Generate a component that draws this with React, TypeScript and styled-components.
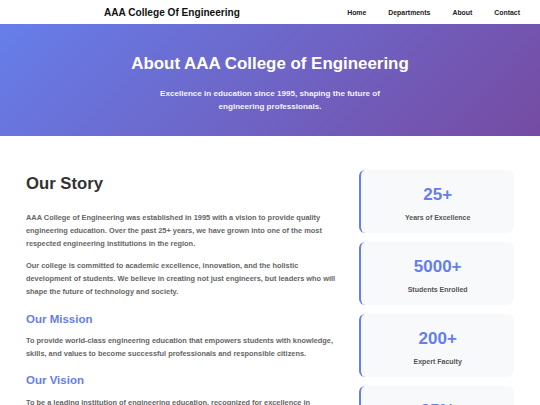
import React from "react";
import styled, { createGlobalStyle } from "styled-components";

const Global = createGlobalStyle`
  * { box-sizing: border-box; margin: 0; padding: 0; }
  body { font-family: "Liberation Sans", Arial, sans-serif; background: #fff; color: #333; }
`;

const Header = styled.header`
  height: 24px;
  display: flex;
  align-items: center;
  justify-content: space-between;
  padding: 0 20px 0 104px;
  background: #fff;
`;

const Logo = styled.div`
  font-size: 10.1px;
  font-weight: 700;
  color: #111;
`;

const Nav = styled.nav`
  display: flex;
  gap: 22px;
`;

const NavLink = styled.a`
  font-size: 6.9px;
  font-weight: 700;
  color: #222;
  text-decoration: none;
`;

const Hero = styled.section`
  height: 112px;
  background: linear-gradient(135deg, #667eea 0%, #764ba2 100%);
  color: #fff;
  display: flex;
  flex-direction: column;
  align-items: center;
  padding-top: 29px;
  text-align: center;
`;

const HeroTitle = styled.h1`
  font-size: 16.9px;
  font-weight: 700;
  line-height: 22px;
`;

const HeroText = styled.p`
  margin-top: 11.5px;
  max-width: 232px;
  font-size: 8.1px;
  font-weight: 700;
  line-height: 13px;
  opacity: 0.92;
`;

const Main = styled.main`
  display: grid;
  grid-template-columns: 2fr 1fr;
  gap: 24px;
  padding: 34px 26px 0;
`;

const Story = styled.div``;

const StoryTitle = styled.h2`
  font-size: 16.7px;
  font-weight: 700;
  color: #333;
  line-height: 22px;
  margin-top: 3px;
  margin-bottom: 16px;
`;

const SubTitle = styled.h3`
  font-size: 11.5px;
  font-weight: 700;
  color: #667eea;
  line-height: 14px;
  margin: 13px 0 8.5px;
`;

const Para = styled.p`
  font-size: 7.4px;
  font-weight: 700;
  color: #666;
  line-height: 13.1px;
  margin-bottom: 9px;
`;

const Stats = styled.div`
  display: flex;
  flex-direction: column;
  gap: 9px;
`;

const StatCard = styled.div`
  height: 63px;
  padding-top: 2px;
  background: #f8f9fb;
  border-left: 2px solid #667eea;
  border-radius: 6px;
  display: flex;
  flex-direction: column;
  align-items: center;
  justify-content: center;
  gap: 9px;
`;

const StatNumber = styled.div`
  font-size: 17px;
  font-weight: 700;
  color: #667eea;
  line-height: 20px;
`;

const StatLabel = styled.div`
  font-size: 7px;
  font-weight: 700;
  color: #555;
`;

const stats = [
  { n: "25+", l: "Years of Excellence" },
  { n: "5000+", l: "Students Enrolled" },
  { n: "200+", l: "Expert Faculty" },
  { n: "95%", l: "Placement Rate" },
];

export default function App() {
  return (
    <>
      <Global />
      <Header>
        <Logo>AAA College Of Engineering</Logo>
        <Nav>
          <NavLink href="#">Home</NavLink>
          <NavLink href="#">Departments</NavLink>
          <NavLink href="#">About</NavLink>
          <NavLink href="#">Contact</NavLink>
        </Nav>
      </Header>
      <Hero>
        <HeroTitle>About AAA College of Engineering</HeroTitle>
        <HeroText>
          Excellence in education since 1995, shaping the future of engineering professionals.
        </HeroText>
      </Hero>
      <Main>
        <Story>
          <StoryTitle>Our Story</StoryTitle>
          <Para>
            AAA College of Engineering was established in 1995 with a vision to provide quality
            engineering education. Over the past 25+ years, we have grown into one of the most
            respected engineering institutions in the region.
          </Para>
          <Para>
            Our college is committed to academic excellence, innovation, and the holistic
            development of students. We believe in creating not just engineers, but leaders who will
            shape the future of technology and society.
          </Para>
          <SubTitle>Our Mission</SubTitle>
          <Para>
            To provide world-class engineering education that empowers students with knowledge,
            skills, and values to become successful professionals and responsible citizens.
          </Para>
          <SubTitle>Our Vision</SubTitle>
          <Para>
            To be a leading institution of engineering education, recognized for excellence in
            teaching, research, and innovation, producing graduates who contribute to society.
          </Para>
        </Story>
        <Stats>
          {stats.map((s) => (
            <StatCard key={s.n}>
              <StatNumber>{s.n}</StatNumber>
              <StatLabel>{s.l}</StatLabel>
            </StatCard>
          ))}
        </Stats>
      </Main>
    </>
  );
}
